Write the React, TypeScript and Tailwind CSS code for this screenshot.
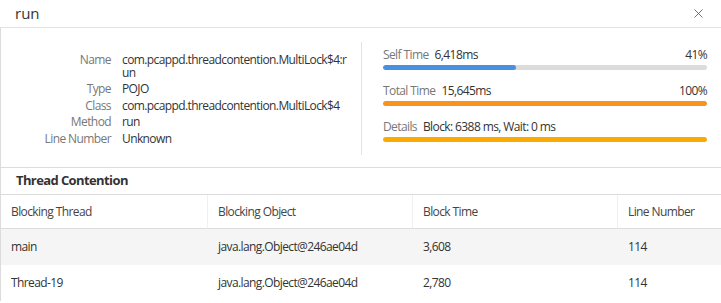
import { X } from "lucide-react";

const info = [
  { label: "Name", value: ["com.pcappd.threadcontention.MultiLock$4:r", "un"] },
  { label: "Type", value: ["POJO"] },
  { label: "Class", value: ["com.pcappd.threadcontention.MultiLock$4"] },
  { label: "Method", value: ["run"] },
  { label: "Line Number", value: ["Unknown"] },
];

const rows = [
  { thread: "main", object: "java.lang.Object@246ae04d", time: "3,608", line: "114" },
  { thread: "Thread-19", object: "java.lang.Object@246ae04d", time: "2,780", line: "114" },
];

function Metric({
  label,
  value,
  pct,
  width,
  color,
}: {
  label: string;
  value: string;
  pct?: string;
  width: number;
  color: string;
}) {
  return (
    <div>
      <div className="flex justify-between h-[16px] leading-[16px] text-[12px]">
        <div>
          <span className="text-[#777]">{label}</span>
          <span className="ml-[6px] text-[#333]">{value}</span>
        </div>
        {pct && <span className="text-[#333]">{pct}</span>}
      </div>
      <div className="mt-[2px] h-[5px] rounded-full bg-[#dcdcdc] overflow-hidden">
        <div className={`h-full rounded-full ${color}`} style={{ width: `${width}%` }} />
      </div>
    </div>
  );
}

export default function App() {
  return (
    <div className="w-[721px] h-[303px] bg-white overflow-hidden font-['Open_Sans',sans-serif] text-[#333] tracking-[-0.6px]">
      <div className="h-[28px] flex items-center justify-between pl-[15px] pr-[15px] border-b border-[#e3e3e3]">
        <span className="text-[15px] text-[#333] tracking-normal">run</span>
        <X size={15} strokeWidth={1.3} className="text-[#555]" />
      </div>

      <div className="border-l border-[#dcdcdc]">
        <div className="flex h-[140px] border-b border-[#dcdcdc]">
          <div className="w-[360px] pt-[26px]">
            <div className="grid grid-cols-[110px_226px] gap-x-[11px] gap-y-[4px] text-[12px] leading-[12.5px]">
              {info.map((r) => (
                <div key={r.label} className="contents">
                  <div className="text-right text-[#777]">{r.label}</div>
                  <div className="text-[#333]">
                    {r.value.map((v) => (
                      <div key={v}>{v}</div>
                    ))}
                  </div>
                </div>
              ))}
            </div>
          </div>
          <div className="w-px bg-[#e3e3e3] mt-[14px] mb-[12px]" />
          <div className="flex-1 pl-[21px] pr-[14px] pt-[19px] flex flex-col gap-[13px]">
            <Metric label="Self Time" value="6,418ms" pct="41%" width={41} color="bg-[#4a90e2]" />
            <Metric label="Total Time" value="15,645ms" pct="100%" width={100} color="bg-[#f7931e]" />
            <Metric label="Details" value="Block: 6388 ms, Wait: 0 ms" width={100} color="bg-[#fcaa00]" />
          </div>
        </div>

        <div className="h-[27px] flex items-center pl-[15px] border-b border-[#dcdcdc] text-[13px] font-bold text-[#333]">
          Thread Contention
        </div>

        <div className="grid grid-cols-[207px_205px_205px_1fr] text-[12px]">
          {["Blocking Thread", "Blocking Object", "Block Time", "Line Number"].map((h, i) => (
            <div
              key={h}
              className={`h-[34px] flex items-center pl-[10px] text-[#444] border-b border-[#dcdcdc] ${
                i < 3 ? "border-r border-r-[#f0f0f0]" : ""
              }`}
            >
              {h}
            </div>
          ))}
          {rows.map((r, i) => (
            <div key={r.thread} className="contents">
              {[r.thread, r.object, r.time, r.line].map((c, j) => (
                <div
                  key={j}
                  className={`h-[36px] flex items-center pl-[10px] text-[#333] ${
                    i === 0 ? "bg-[#f5f5f5]" : "bg-white"
                  }`}
                >
                  {c}
                </div>
              ))}
            </div>
          ))}
        </div>
      </div>
    </div>
  );
}
